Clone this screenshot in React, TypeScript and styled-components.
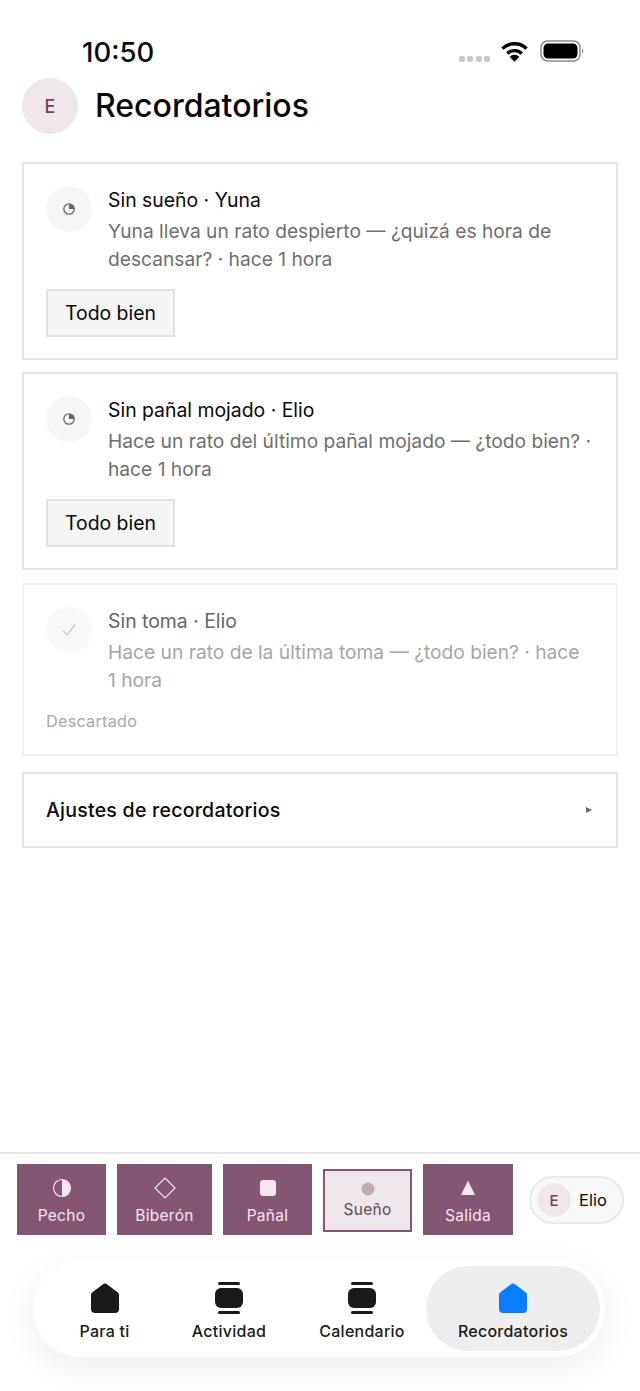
import styled, { createGlobalStyle } from "styled-components";

const GlobalStyle = createGlobalStyle`
  html, body {
    margin: 0;
    padding: 0;
    background: #fff;
  }
  * {
    box-sizing: border-box;
  }
`;

const Page = styled.div`
  width: 640px;
  height: 1391px;
  display: flex;
  flex-direction: column;
  overflow: hidden;
  background: #fff;
  font-family: Inter, "Liberation Sans", sans-serif;
  color: #0a0a0a;
`;

const StatusBar = styled.div`
  height: 78px;
  flex: none;
  display: flex;
  justify-content: space-between;
  padding: 36px 56px 0 82px;
`;

const Clock = styled.div`
  font-size: 27.5px;
  line-height: 32px;
  font-weight: 500;
`;

const StatusIcons = styled.div`
  display: flex;
  align-items: center;
  height: 30px;
`;

const Signal = styled.div`
  display: flex;
  gap: 2.5px;
  margin: 15px 11px 0 0;
`;

const SignalDot = styled.span`
  width: 6px;
  height: 6px;
  border-radius: 2px;
  background: #c9c9c9;
`;

const WifiIcon = styled.svg`
  margin: 2px 12px 0 0;
`;

const Header = styled.header`
  flex: none;
  display: flex;
  align-items: center;
  gap: 17px;
  padding: 0 22px;
  height: 56px;
`;

const Avatar = styled.div<{ $size: number; $font: number }>`
  width: ${({ $size }) => $size}px;
  height: ${({ $size }) => $size}px;
  border-radius: 50%;
  flex: none;
  display: flex;
  align-items: center;
  justify-content: center;
  background: #efe7ec;
  border: 1px solid #ebebeb;
  color: #74425f;
  font-size: ${({ $font }) => $font}px;
  font-weight: 500;
`;

const Title = styled.h1`
  margin: 0;
  font-size: 32px;
  line-height: 40px;
  font-weight: 500;
`;

const Content = styled.main`
  flex: 1;
  display: flex;
  flex-direction: column;
  padding: 28px 22px 0;
`;

const Card = styled.section<{ $faded?: boolean }>`
  width: 596px;
  margin: ${({ $faded }) => ($faded ? "1px" : "0")} 0 12px;
  padding: 22px 22px ${({ $faded }) => ($faded ? "23px" : "21px")};
  border: 2px solid ${({ $faded }) => ($faded ? "#f0f0f0" : "#e6e6e6")};
  background: #fff;
`;

const CardRow = styled.div`
  display: flex;
  gap: 16px;
`;

const IconCircle = styled.div<{ $faded?: boolean }>`
  width: 46px;
  height: 46px;
  flex: none;
  border-radius: 50%;
  background: ${({ $faded }) => ($faded ? "#f9f9f9" : "#f6f6f6")};
  display: flex;
  align-items: center;
  justify-content: center;
`;

const CardText = styled.div`
  flex: 1;
  min-width: 0;
`;

const CardTitle = styled.div<{ $faded?: boolean }>`
  font-size: 19.4px;
  line-height: 28px;
  font-weight: 400;
  color: ${({ $faded }) => ($faded ? "#666" : "#0a0a0a")};
`;

const CardBody = styled.p<{ $faded?: boolean }>`
  margin: 3px 0 0;
  font-size: 19.2px;
  line-height: 28px;
  color: ${({ $faded }) => ($faded ? "#a6a6a6" : "#6f6f6f")};
`;

const OkButton = styled.button`
  display: block;
  margin-top: 16px;
  width: 129px;
  height: 48px;
  padding: 0;
  background: #f5f5f5;
  border: 2px solid #e2e2e2;
  border-radius: 0;
  font: 400 19.4px Inter, "Liberation Sans", sans-serif;
  color: #0a0a0a;
`;

const Dismissed = styled.div`
  margin-top: 17px;
  font-size: 16.3px;
  line-height: 20px;
  letter-spacing: 0.2px;
  color: #a8a8a8;
`;

const SettingsRow = styled.div`
  width: 596px;
  height: 76px;
  margin-top: 4px;
  padding: 0 24px 0 22px;
  border: 2px solid #e6e6e6;
  display: flex;
  align-items: center;
  justify-content: space-between;
  font-size: 19.5px;
  font-weight: 500;
  letter-spacing: 0.25px;
`;

const Caret = styled.span`
  width: 0;
  height: 0;
  border-left: 6px solid #666;
  border-top: 3px solid transparent;
  border-bottom: 3px solid transparent;
`;

const QuickBar = styled.div`
  flex: none;
  height: 96px;
  border-top: 2px solid #e6e6e6;
  padding: 10px 16px 0 17px;
  display: flex;
  align-items: flex-start;
`;

const QuickButton = styled.button<{ $width: number; $gap: number }>`
  width: ${({ $width }) => $width}px;
  height: 71px;
  margin-right: ${({ $gap }) => $gap}px;
  flex: none;
  padding: 12px 0 0;
  border: none;
  border-radius: 0;
  background: #855674;
  color: #f5e6ef;
  display: flex;
  flex-direction: column;
  align-items: center;
  gap: 6px;
  font: 400 15.5px Inter, "Liberation Sans", sans-serif;
  letter-spacing: 0.3px;
`;

const ActiveQuickButton = styled(QuickButton)`
  height: 63px;
  margin-top: 5px;
  padding-top: 6px;
  gap: 0;
  line-height: 18px;
  background: #efe6eb;
  border: 2px solid #855674;
  color: #5f4a59;
`;

const QuickIcon = styled.svg`
  width: 24px;
  height: 24px;
  display: block;
`;

const ChildPill = styled.div`
  margin: 12px 0 0 16px;
  width: 95px;
  height: 48px;
  flex: none;
  padding: 0 0 0 6px;
  border: 2px solid #e9e9e9;
  border-radius: 24px;
  background: #f9f9f9;
  display: flex;
  align-items: center;
  gap: 8px;
  font-size: 16.5px;
  font-weight: 400;
`;

const NavArea = styled.div`
  flex: none;
  height: 143px;
  padding: 12px 35px 0 33px;
`;

const NavBar = styled.nav`
  width: 572px;
  height: 97px;
  border-radius: 48px;
  background: #fff;
  box-shadow: 0 10px 36px rgba(0, 0, 0, 0.07);
  display: flex;
  align-items: center;
  padding: 0 5px 0 0;
`;

const NavItem = styled.div<{ $width: number; $before?: number; $active?: boolean }>`
  width: ${({ $width }) => $width}px;
  margin-left: ${({ $before }) => $before ?? 0}px;
  height: 85px;
  flex: none;
  border-radius: 42px;
  background: ${({ $active }) => ($active ? "#eeeeee" : "transparent")};
  display: flex;
  flex-direction: column;
  align-items: center;
  padding-top: 15px;
  gap: 6px;
  font-size: 16px;
  line-height: 20px;
  font-weight: 450;
  letter-spacing: 0.25px;
  color: #1a1a1a;
`;

const NavIcon = styled.svg<{ $active?: boolean }>`
  width: 32px;
  height: 34px;
  display: block;
  fill: ${({ $active }) => ($active ? "#0a7cff" : "#1a1a1a")};
`;

const ClockGlyph = () => (
  <svg width="14" height="14" viewBox="0 0 14 14">
    <circle cx="7" cy="7" r="5.2" fill="none" stroke="#666" strokeWidth="1.3" />
    <path d="M7 7V1.8A5.2 5.2 0 0 1 12.2 7Z" fill="#666" />
  </svg>
);

const CheckGlyph = () => (
  <svg width="16" height="14" viewBox="0 0 16 14">
    <path d="M2 7.5L6 12L14 1.5" fill="none" stroke="#a8a8a8" strokeWidth="1" />
  </svg>
);

const HomeShape = ({ active }: { active?: boolean }) => (
  <NavIcon $active={active} viewBox="0 0 32 34">
    <path d="M16 2.5a3 3 0 0 1 2 .7l10.6 8a3 3 0 0 1 1.4 2.5V28a4 4 0 0 1-4 4H6a4 4 0 0 1-4-4V13.7a3 3 0 0 1 1.4-2.5l10.6-8a3 3 0 0 1 2-.7Z" />
  </NavIcon>
);

const StackShape = () => (
  <NavIcon viewBox="0 0 32 34">
    <rect x="5" y="1" width="22" height="3" rx="1.5" />
    <rect x="2" y="7" width="28" height="20" rx="6" />
    <rect x="5" y="30" width="22" height="3" rx="1.5" />
  </NavIcon>
);

const StatusIconsGroup = () => (
  <StatusIcons>
    <Signal>
      <SignalDot />
      <SignalDot />
      <SignalDot />
      <SignalDot />
    </Signal>
    <WifiIcon width="27" height="22" viewBox="0 0 28 22">
      <path d="M1.5 7.5a18 18 0 0 1 25 0" fill="none" stroke="#000" strokeWidth="3.4" />
      <path d="M6.5 12.5a11 11 0 0 1 15 0" fill="none" stroke="#000" strokeWidth="3.4" />
      <path d="M14 21l-5-5a7 7 0 0 1 10 0Z" fill="#000" />
    </WifiIcon>
    <svg width="44" height="22" viewBox="0 0 44 22">
      <rect x="1" y="1" width="39" height="20" rx="6.5" fill="none" stroke="#8a8a8a" strokeWidth="1.5" />
      <rect x="3.5" y="3.5" width="34" height="15" rx="4.5" fill="#000" />
      <path d="M42 8.5a3 3 0 0 1 0 5Z" fill="#8a8a8a" />
    </svg>
  </StatusIcons>
);

const alerts = [
  {
    title: "Sin sueño · Yuna",
    body: "Yuna lleva un rato despierto — ¿quizá es hora de descansar? · hace 1 hora",
  },
  {
    title: "Sin pañal mojado · Elio",
    body: "Hace un rato del último pañal mojado — ¿todo bien? · hace 1 hora",
  },
];

export default function App() {
  return (
    <Page>
      <GlobalStyle />
      <StatusBar>
        <Clock>10:50</Clock>
        <StatusIconsGroup />
      </StatusBar>
      <Header>
        <Avatar $size={56} $font={18}>E</Avatar>
        <Title>Recordatorios</Title>
      </Header>
      <Content>
        {alerts.map((a) => (
          <Card key={a.title}>
            <CardRow>
              <IconCircle>
                <ClockGlyph />
              </IconCircle>
              <CardText>
                <CardTitle>{a.title}</CardTitle>
                <CardBody>{a.body}</CardBody>
              </CardText>
            </CardRow>
            <OkButton>Todo bien</OkButton>
          </Card>
        ))}
        <Card $faded>
          <CardRow>
            <IconCircle $faded>
              <CheckGlyph />
            </IconCircle>
            <CardText>
              <CardTitle $faded>Sin toma · Elio</CardTitle>
              <CardBody $faded>Hace un rato de la última toma — ¿todo bien? · hace 1{"\u00a0"}hora</CardBody>
            </CardText>
          </CardRow>
          <Dismissed>Descartado</Dismissed>
        </Card>
        <SettingsRow>
          Ajustes de recordatorios
          <Caret />
        </SettingsRow>
      </Content>
      <QuickBar>
        <QuickButton $width={89} $gap={11}>
          <QuickIcon viewBox="0 0 24 24">
            <circle cx="12" cy="12" r="8.5" fill="none" stroke="#f5e6ef" strokeWidth="1.2" />
            <path d="M12 3.5a8.5 8.5 0 0 1 0 17Z" fill="#f5e6ef" />
          </QuickIcon>
          Pecho
        </QuickButton>
        <QuickButton $width={95} $gap={11}>
          <QuickIcon viewBox="0 0 24 24">
            <path d="M12 2l10 10-10 10L2 12Z" fill="none" stroke="#f5e6ef" strokeWidth="1.2" />
          </QuickIcon>
          Biberón
        </QuickButton>
        <QuickButton $width={89} $gap={11}>
          <QuickIcon viewBox="0 0 24 24">
            <rect x="4" y="4" width="16" height="16" rx="3" fill="#f5e6ef" />
          </QuickIcon>
          Pañal
        </QuickButton>
        <ActiveQuickButton $width={89} $gap={11}>
          <QuickIcon viewBox="0 0 24 24">
            <circle cx="12" cy="12" r="6.5" fill="#c3aab9" />
          </QuickIcon>
          Sueño
        </ActiveQuickButton>
        <QuickButton $width={90} $gap={0}>
          <QuickIcon viewBox="0 0 24 24">
            <path d="M12 4.5L19 19H5Z" fill="#f5e6ef" />
          </QuickIcon>
          Salida
        </QuickButton>
        <ChildPill>
          <Avatar $size={34} $font={15}>E</Avatar>
          Elio
        </ChildPill>
      </QuickBar>
      <NavArea>
        <NavBar>
          <NavItem $width={143}>
            <HomeShape />
            Para ti
          </NavItem>
          <NavItem $width={106}>
            <StackShape />
            Actividad
          </NavItem>
          <NavItem $width={128} $before={16}>
            <StackShape />
            Calendario
          </NavItem>
          <NavItem $width={174} $active>
            <HomeShape active />
            Recordatorios
          </NavItem>
        </NavBar>
      </NavArea>
    </Page>
  );
}
